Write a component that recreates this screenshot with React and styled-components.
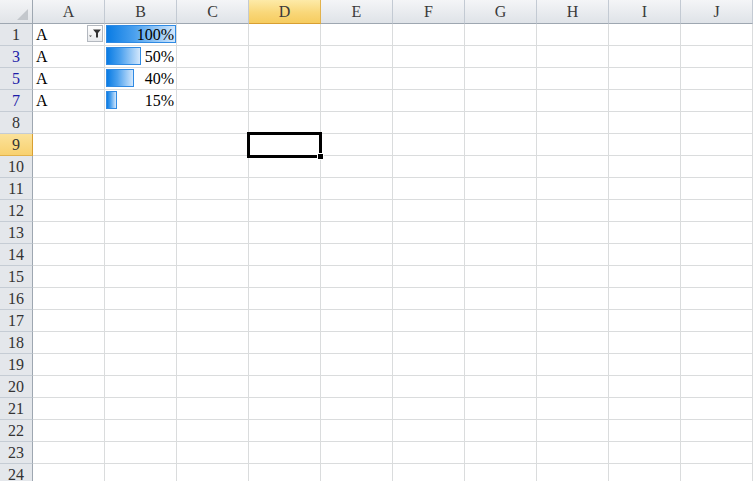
import React from 'react'
import styled, {createGlobalStyle, css} from 'styled-components'

const GlobalStyle = createGlobalStyle`
    html, body {
        margin: 0;
        padding: 0;
        background: #ffffff;
        overflow: hidden;
    }
    body {
        font-family: "Liberation Serif", "Noto Sans CJK TC", serif;
    }
`

const COLS = ['A', 'B', 'C', 'D', 'E', 'F', 'G', 'H', 'I', 'J']
const ROWS = [1, 3, 5, 7, 8, 9, 10, 11, 12, 13, 14, 15, 16, 17, 18, 19, 20, 21, 22, 23, 24]
const FILTERED = [3, 5, 7]
const DATA = {
    1: {A: 'A', B: 1},
    3: {A: 'A', B: 0.5},
    5: {A: 'A', B: 0.4},
    7: {A: 'A', B: 0.15},
}
const ACTIVE = {col: 'D', row: 9}

const Sheet = styled.div`
    display: grid;
    grid-template-columns: 33px repeat(${COLS.length}, 72px);
    grid-template-rows: 24px repeat(${ROWS.length}, 22px);
    width: max-content;
    font-size: 16px;
    color: #000;
`

const headerBase = css`
    box-sizing: border-box;
    display: flex;
    align-items: center;
    justify-content: center;
    font-size: 16px;
    color: #3a3a3a;
`

const Corner = styled.div`
    ${headerBase};
    position: relative;
    background: linear-gradient(#f3f4f6, #e1e4e8);
    border-right: 1px solid #9ea7b1;
    border-bottom: 1px solid #9ea7b1;

    &::after {
        content: '';
        position: absolute;
        right: 4px;
        bottom: 3px;
        width: 0;
        height: 0;
        border-left: 11px solid transparent;
        border-bottom: 11px solid #c3c7cc;
    }
`

const ColHeader = styled.div`
    ${headerBase};
    padding-top: 1px;
    background: ${({$active}) =>
        $active ? 'linear-gradient(#fdeaa8, #f9d779 55%, #f6cc5f)' : 'linear-gradient(#f4f5f7, #dfe3e8)'};
    border-right: 1px solid ${({$active}) => ($active ? '#e2b24c' : '#c3cad3')};
    border-bottom: 1px solid ${({$active}) => ($active ? '#d89f32' : '#9ea7b1')};
`

const RowHeader = styled.div`
    ${headerBase};
    padding-top: 1px;
    color: ${({$filtered}) => ($filtered ? '#1c1ca8' : '#333')};
    background: ${({$active}) =>
        $active ? 'linear-gradient(#fbe29a, #f8d170)' : '#e4e7eb'};
    border-right: 1px solid ${({$active}) => ($active ? '#d89f32' : '#9ea7b1')};
    border-bottom: 1px solid ${({$active}) => ($active ? '#e2b24c' : '#c5ccd4')};
`

const Cell = styled.div`
    position: relative;
    box-sizing: border-box;
    display: flex;
    align-items: flex-end;
    justify-content: ${({$right}) => ($right ? 'flex-end' : 'flex-start')};
    padding: 0 2px 1px 3px;
    border-right: 1px solid #dadcdd;
    border-bottom: 1px solid #dadcdd;
    line-height: 19px;
    white-space: nowrap;
`

const CellText = styled.span`
    position: relative;
    z-index: 1;
`

const DataBar = styled.div`
    position: absolute;
    left: 1px;
    top: 1px;
    bottom: 2px;
    box-sizing: border-box;
    border: 1px solid #2f8ae3;
    background: linear-gradient(90deg, #0a7ce4 0%, #4aa0ee 40%, #d2e7fc 100%);
`

const FilterButton = styled.div`
    position: absolute;
    right: 1px;
    top: 1px;
    width: 16px;
    height: 17px;
    box-sizing: border-box;
    border: 1px solid #b3b8bf;
    background: linear-gradient(#ffffff, #e8eaed);
    display: flex;
    align-items: center;
    justify-content: center;
    z-index: 2;
`

const Selection = styled.div`
    position: absolute;
    left: -2px;
    top: -2px;
    width: 75px;
    height: 26px;
    box-sizing: border-box;
    border: 3px solid #000;
    z-index: 3;
    pointer-events: none;

    &::after {
        content: '';
        position: absolute;
        right: -5px;
        bottom: -5px;
        width: 5px;
        height: 5px;
        background: #000;
        border: 1px solid #fff;
    }
`

const FilterIcon = () => (
    <svg width="14" height="13" viewBox="0 0 14 13">
        <path d="M1 8.5 L4 8.5 L2.5 10 Z" fill="#555" />
        <path d="M5 2.5 H13 L10 6 V10.5 H8 V6 Z" fill="#333" />
    </svg>
)

const renderCell = (row, col) => {
    const value = DATA[row] && DATA[row][col]
    const isActive = row === ACTIVE.row && col === ACTIVE.col
    if (col === 'B' && typeof value === 'number') {
        return (
            <Cell key={col} $right>
                <DataBar style={{width: `${Math.max(4, Math.round(value * 70))}px`}} />
                <CellText>{Math.round(value * 100)}%</CellText>
            </Cell>
        )
    }
    return (
        <Cell key={col}>
            {value && <CellText>{value}</CellText>}
            {col === 'A' && row === 1 && (
                <FilterButton>
                    <FilterIcon />
                </FilterButton>
            )}
            {isActive && <Selection />}
        </Cell>
    )
}

export default function App() {
    return (
        <>
            <GlobalStyle />
            <Sheet>
                <Corner />
                {COLS.map((c) => (
                    <ColHeader key={c} $active={c === ACTIVE.col}>
                        {c}
                    </ColHeader>
                ))}
                {ROWS.map((r) => (
                    <React.Fragment key={r}>
                        <RowHeader $active={r === ACTIVE.row} $filtered={FILTERED.includes(r)}>
                            {r}
                        </RowHeader>
                        {COLS.map((c) => renderCell(r, c))}
                    </React.Fragment>
                ))}
            </Sheet>
        </>
    )
}
